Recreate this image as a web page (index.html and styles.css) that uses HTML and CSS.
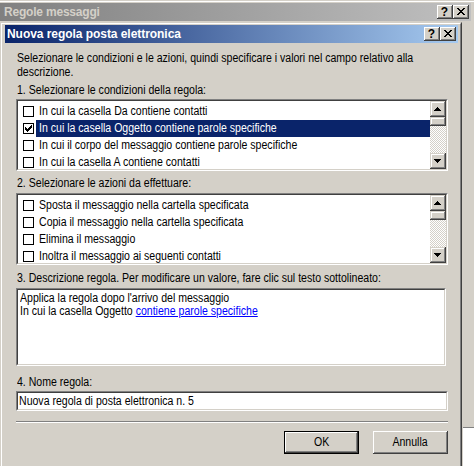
FILE: index.html
```html
<!DOCTYPE html>
<html lang="it">
<head>
<meta charset="utf-8">
<title>Nuova regola posta elettronica</title>
<link rel="stylesheet" href="styles.css">
</head>
<body>
<div class="outer">
  <div class="outer-hl">
    <div class="outer-caption">
      <span class="outer-title">Regole messaggi</span>
      <div class="capbtns">
        <div class="capbtn"><span class="q">?</span></div>
        <div class="capbtn"><svg width="8" height="7" viewBox="0 0 8 7"><path d="M0 0h2v1h-2z M6 0h2v1h-2z M1 1h2v1h-2z M5 1h2v1h-2z M2 2h4v1h-4z M3 3h2v1h-2z M2 4h4v1h-4z M1 5h2v1h-2z M5 5h2v1h-2z M0 6h2v1h-2z M6 6h2v1h-2z" fill="#000"/></svg></div>
      </div>
    </div>
  </div>
</div>
<div class="behind"></div>

<div class="dialog">
  <div class="dlg-frame">
    <div class="caption">
      <span class="title">Nuova regola posta elettronica</span>
      <div class="capbtns">
        <div class="capbtn"><span class="q">?</span></div>
        <div class="capbtn"><svg width="8" height="7" viewBox="0 0 8 7"><path d="M0 0h2v1h-2z M6 0h2v1h-2z M1 1h2v1h-2z M5 1h2v1h-2z M2 2h4v1h-4z M3 3h2v1h-2z M2 4h4v1h-4z M1 5h2v1h-2z M5 5h2v1h-2z M0 6h2v1h-2z M6 6h2v1h-2z" fill="#000"/></svg></div>
      </div>
    </div>
    <div class="client">
      <div class="intro">
        <div class="line"><span class="sx">Selezionare le condizioni e le azioni, quindi specificare i valori nel campo relativo alla</span></div>
        <div class="line"><span class="sx">descrizione.</span></div>
      </div>

      <div class="label l1"><span class="sx">1. Selezionare le condizioni della regola:</span></div>
      <div class="listbox">
        <div class="lb-inner">
          <ul class="items">
            <li class="item"><span class="cb"></span><span class="txt"><span class="sx">In cui la casella Da contiene contatti</span></span></li>
            <li class="item sel"><span class="cb"><svg width="9" height="9" viewBox="0 0 9 9"><path transform="translate(1 1)" d="M6 0h1v1h-1z M5 1h2v1h-2z M0 2h1v1h-1z M4 2h3v1h-3z M0 3h2v1h-2z M3 3h3v1h-3z M0 4h5v1h-5z M1 5h3v1h-3z M2 6h1v1h-1z" fill="#000"/></svg></span><span class="txt"><span class="sx">In cui la casella Oggetto contiene parole specifiche</span></span></li>
            <li class="item"><span class="cb"></span><span class="txt"><span class="sx">In cui il corpo del messaggio contiene parole specifiche</span></span></li>
            <li class="item"><span class="cb"></span><span class="txt"><span class="sx">In cui la casella A contiene contatti</span></span></li>
          </ul>
          <div class="scrollbar">
            <div class="sbtn"><svg width="7" height="4" viewBox="0 0 7 4"><path d="M3 0h1v1h-1z M2 1h3v1h-3z M1 2h5v1h-5z M0 3h7v1h-7z" fill="#000"/></svg></div>
            <div class="thumb"></div>
            <div class="track"></div>
            <div class="sbtn"><svg width="7" height="4" viewBox="0 0 7 4"><path d="M0 0h7v1h-7z M1 1h5v1h-5z M2 2h3v1h-3z M3 3h1v1h-1z" fill="#000"/></svg></div>
          </div>
        </div>
      </div>

      <div class="label l2"><span class="sx">2. Selezionare le azioni da effettuare:</span></div>
      <div class="listbox">
        <div class="lb-inner">
          <ul class="items">
            <li class="item"><span class="cb"></span><span class="txt"><span class="sx">Sposta il messaggio nella cartella specificata</span></span></li>
            <li class="item"><span class="cb"></span><span class="txt"><span class="sx">Copia il messaggio nella cartella specificata</span></span></li>
            <li class="item"><span class="cb"></span><span class="txt"><span class="sx">Elimina il messaggio</span></span></li>
            <li class="item"><span class="cb"></span><span class="txt"><span class="sx">Inoltra il messaggio ai seguenti contatti</span></span></li>
          </ul>
          <div class="scrollbar">
            <div class="sbtn"><svg width="7" height="4" viewBox="0 0 7 4"><path d="M3 0h1v1h-1z M2 1h3v1h-3z M1 2h5v1h-5z M0 3h7v1h-7z" fill="#000"/></svg></div>
            <div class="thumb"></div>
            <div class="track"></div>
            <div class="sbtn"><svg width="7" height="4" viewBox="0 0 7 4"><path d="M0 0h7v1h-7z M1 1h5v1h-5z M2 2h3v1h-3z M3 3h1v1h-1z" fill="#000"/></svg></div>
          </div>
        </div>
      </div>

      <div class="label l3"><span class="sx">3. Descrizione regola. Per modificare un valore, fare clic sul testo sottolineato:</span></div>
      <div class="desc">
        <div class="desc-inner">
          <div class="dline"><span class="sx">Applica la regola dopo l'arrivo del messaggio</span></div>
          <div class="dline"><span class="sx">In cui la casella Oggetto <a class="link" href="#">contiene parole specifiche</a></span></div>
        </div>
      </div>

      <div class="label l4"><span class="sx">4. Nome regola:</span></div>
      <div class="edit">
        <div class="edit-inner"><span class="sx">Nuova regola di posta elettronica n. 5</span></div>
      </div>

      <div class="sep"></div>

      <div class="buttons">
        <div class="btn default"><div class="btn-face"><span class="sx sx-c">OK</span></div></div>
        <div class="btn"><div class="btn-face"><span class="sx sx-c">Annulla</span></div></div>
      </div>
    </div>
  </div>
</div>
</body>
</html>
```
FILE: styles.css
```css
* { box-sizing: border-box; }
html, body { margin: 0; padding: 0; }
body {
  width: 474px;
  height: 466px;
  overflow: hidden;
  position: relative;
  background: #d4d0c8;
  color: #000;
  font-family: "Liberation Sans", Arial, sans-serif;
  font-size: 12px;
}

/* condensed UI text (narrow system font look) */
.sx {
  display: inline-block;
  white-space: nowrap;
  transform: scaleX(0.88);
  transform-origin: 0 50%;
}
.sx-c { transform-origin: 50% 50%; }

/* outer (background) window */
.outer { border-top: 1px solid #d4d0c8; }
.outer-hl { border-top: 1px solid #fff; padding-top: 1px; }
.outer-caption {
  height: 18px;
  margin-right: 3px;
  background: linear-gradient(to right, #808080, #c0c0c0);
  display: flex;
  align-items: center;
  padding: 0 2px 0 4px;
}
.outer-title {
  flex: 1;
  font: bold 12px "Liberation Sans", sans-serif;
  letter-spacing: -0.2px;
  color: #d4d0c8;
}
.behind {
  position: absolute;
  left: 463px;
  top: 427px;
  right: 0;
  bottom: 0;
  background: #fff;
  border-top: 1px solid #808080;
}

/* caption buttons */
.capbtns { display: flex; gap: 0; }
.capbtn {
  width: 16px;
  height: 14px;
  background: #d4d0c8;
  box-shadow: inset -1px -1px #404040, inset 1px 1px #fff, inset -2px -2px #808080, inset 2px 2px #d4d0c8;
  display: flex;
  align-items: center;
  justify-content: center;
  padding: 0 1px 1px 0;
}
.capbtn svg { display: block; }
.q {
  font: bold 12px/12px "Liberation Sans", sans-serif;
  color: #000;
}

/* dialog window */
.dialog {
  position: absolute;
  left: 0;
  top: 22px;
  width: 462px;
  height: 460px;
  background: #d4d0c8;
  border: 1px solid;
  border-color: #d4d0c8 #404040 #404040 #d4d0c8;
}
.dlg-frame {
  height: 100%;
  border: 1px solid;
  border-color: #fff #808080 #808080 #fff;
  padding: 1px 2px 0 3px;
}
.caption {
  height: 18px;
  background: linear-gradient(to right, #0a246a, #a6caf0);
  display: flex;
  align-items: center;
  padding: 0 2px 0 2px;
}
.title {
  flex: 1;
  font: bold 12px "Liberation Sans", sans-serif;
  letter-spacing: -0.05px;
  color: #fff;
}

.client {
  padding: 0 10px 0 11px;
}
.intro {
  margin-top: 8px;
  padding-left: 1px;
}
.line { height: 14px; line-height: 14px; }
.label {
  height: 14px;
  line-height: 14px;
  padding-left: 1px;
}
.l1 { margin-top: 4px; margin-bottom: 2px; }
.l2 { margin-top: 5px; margin-bottom: 3px; }
.l3 { margin-top: 6px; margin-bottom: 3px; }
.l4 { margin-top: 9px; margin-bottom: 2px; }

/* sunken controls */
.listbox, .desc, .edit {
  border: 1px solid;
  border-color: #808080 #fff #fff #808080;
}
.lb-inner, .desc-inner, .edit-inner {
  height: 100%;
  border: 1px solid;
  border-color: #404040 #d4d0c8 #d4d0c8 #404040;
  background: #fff;
}
.listbox { height: 72px; }
.lb-inner { display: flex; overflow: hidden; }
.items {
  list-style: none;
  margin: 0;
  padding: 2px 0 0 0;
  flex: 1;
  overflow: hidden;
}
.item {
  height: 17px;
  display: flex;
  align-items: center;
  padding-left: 5px;
}
.cb {
  width: 11px;
  height: 11px;
  border: 1px solid #000;
  background: #fff;
  flex: none;
  display: block;
}
.cb svg { display: block; }
.txt {
  margin-left: 2px;
  padding-left: 3px;
  height: 17px;
  line-height: 17px;
  flex: 1;
  overflow: hidden;
}
.sel .txt { background: #0a246a; color: #fff; }

.scrollbar {
  width: 16px;
  flex: none;
  display: flex;
  flex-direction: column;
}
.sbtn, .thumb {
  background: #d4d0c8;
  box-shadow: inset -1px -1px #404040, inset 1px 1px #d4d0c8, inset -2px -2px #808080, inset 2px 2px #fff;
}
.sbtn {
  height: 16px;
  display: flex;
  align-items: center;
  justify-content: center;
  padding: 0 1px 1px 0;
}
.sbtn svg { display: block; }
.thumb { height: 9px; }
.track {
  flex: 1;
  background: repeating-conic-gradient(#fff 0 25%, #d4d0c8 0 50%) 0 0 / 2px 2px;
}

.desc { height: 78px; width: 430px; }
.desc-inner { padding: 2px 0 0 2px; }
.dline { height: 13px; line-height: 13px; }
.link { color: #0000ff; text-decoration: underline; }

.edit { height: 20px; }
.edit-inner {
  line-height: 16px;
  padding-left: 1px;
}

.sep {
  margin-top: 10px;
  height: 2px;
  border-top: 1px solid #808080;
  border-bottom: 1px solid #fff;
}

.buttons {
  margin-top: 8px;
  display: flex;
  justify-content: flex-end;
  gap: 14px;
}
.btn {
  width: 75px;
  height: 23px;
}
.btn-face {
  height: 100%;
  background: #d4d0c8;
  box-shadow: inset -1px -1px #404040, inset 1px 1px #fff, inset -2px -2px #808080, inset 2px 2px #d4d0c8;
  display: flex;
  align-items: center;
  justify-content: center;
  padding-bottom: 1px;
}
.default { border: 1px solid #000; }
```
